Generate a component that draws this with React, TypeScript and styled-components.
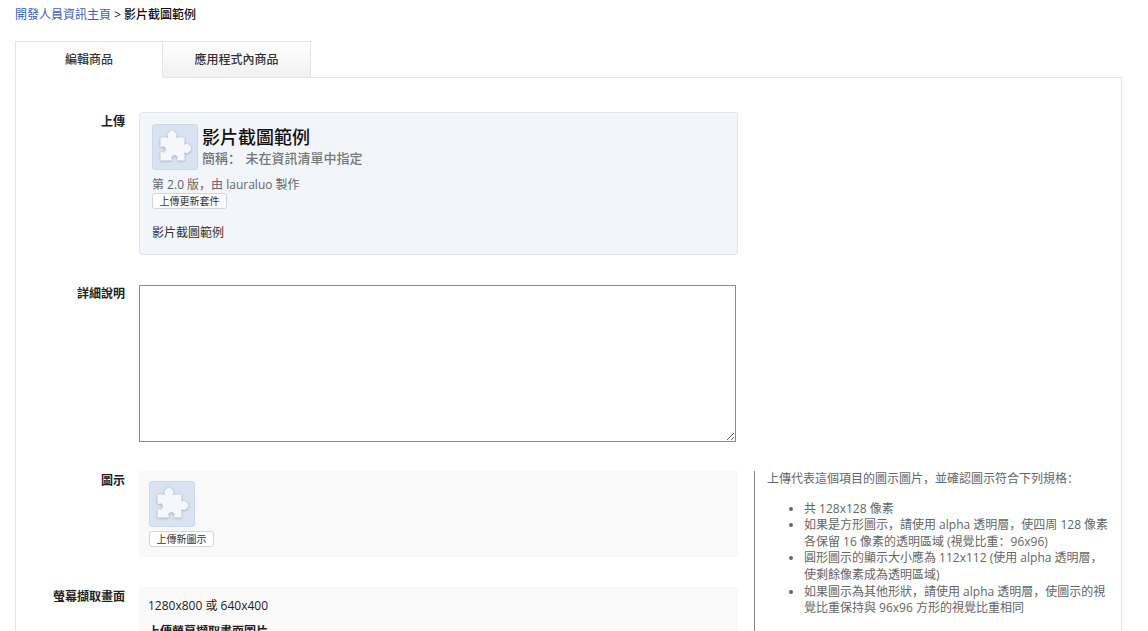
import React from 'react';
import styled, { createGlobalStyle } from 'styled-components';

const GlobalStyle = createGlobalStyle`
  html, body {
    margin: 0;
    padding: 0;
    height: 631px;
    overflow: hidden;
    background: #fff;
    font-family: 'Open Sans', 'Noto Sans CJK SC', sans-serif;
    font-size: 12px;
    color: #333;
  }
`;

const Page = styled.div`
  width: 1148px;
  height: 631px;
  overflow: hidden;
  padding: 7px 26px 0 15px;
  box-sizing: border-box;
`;

const Breadcrumb = styled.div`
  height: 34px;
  line-height: 16px;
  font-weight: 500;
  color: #111;
`;

const CrumbLink = styled.a`
  color: #3b5eb5;
  font-weight: 400;
  text-decoration: none;
`;

const TabBar = styled.div`
  display: flex;
  height: 37px;
  box-sizing: border-box;
  margin-bottom: -1px;
  position: relative;
`;

const Tab = styled.div<{ $active?: boolean; $width: number }>`
  width: ${({ $width }) => $width}px;
  box-sizing: border-box;
  border: 1px solid #e5e5e5;
  border-left-width: ${({ $active }) => ($active ? 1 : 0)}px;
  border-bottom: ${({ $active }) => ($active ? '1px solid #fff' : '1px solid #e5e5e5')};
  background: ${({ $active }) => ($active ? '#fff' : 'linear-gradient(#fff, #f1f1f1)')};
  text-align: center;
  line-height: 35px;
  color: #333;
  font-weight: 500;
`;

const Panel = styled.div`
  border: 1px solid #e5e5e5;
  border-bottom: 0;
  padding-top: 34px;
  height: 600px;
  box-sizing: border-box;
`;

const Row = styled.div<{ $gap: number }>`
  display: grid;
  grid-template-columns: 109px 599px 1fr;
  column-gap: 14px;
  margin-bottom: ${({ $gap }) => $gap}px;
`;

const Label = styled.div<{ $top?: number }>`
  text-align: right;
  font-weight: 700;
  color: #222;
  line-height: 16px;
  padding-top: ${({ $top }) => $top ?? 2}px;
`;

const Card = styled.div`
  background: #f2f5fa;
  border: 1px solid #dfe6f1;
  border-radius: 3px;
  height: 143px;
  box-sizing: border-box;
  padding: 11px 12px;
`;

const CardHead = styled.div`
  display: flex;
  gap: 4px;
`;

const IconTile = styled.div`
  width: 46px;
  height: 46px;
  flex: none;
  box-sizing: border-box;
  background: #d9e2f1;
  border: 1px solid #cdd8ea;
  border-radius: 3px;
  display: flex;
  align-items: center;
  justify-content: center;
`;

const CardTitle = styled.div`
  font-size: 18px;
  line-height: 24px;
  color: #111;
  font-weight: 500;
  margin-top: 1px;
`;

const CardSub = styled.div`
  font-size: 13px;
  line-height: 18px;
  color: #777;
  font-weight: 500;
  word-spacing: 1px;
`;

const Version = styled.div`
  margin-top: 7px;
  line-height: 16px;
  color: #666;
`;

const SmallButton = styled.button`
  display: block;
  height: 16px;
  padding: 0 6.5px;
  background: #fff;
  border: 1px solid #d6d6d6;
  border-radius: 3px;
  font: inherit;
  font-size: 10px;
  line-height: 14px;
  color: #333;
`;

const CardDesc = styled.div`
  margin-top: 16px;
  line-height: 16px;
  color: #333;
`;

const Details = styled.textarea`
  display: block;
  width: 597px;
  height: 157px;
  box-sizing: border-box;
  margin: 0;
  border: 1px solid #8a8a8a;
  background: #fff;
`;

const IconPanel = styled.div`
  background: #f9f9f9;
  height: 86px;
  box-sizing: border-box;
  padding: 10px;
`;

const NewIconButton = styled(SmallButton)`
  margin-top: 4px;
`;

const ShotPanel = styled.div`
  background: #f9f9f9;
  height: 80px;
  box-sizing: border-box;
  padding: 11px 9px;
  line-height: 16px;
  color: #222;
`;

const ShotTitle = styled.div`
  margin-top: 10px;
  font-weight: 700;
`;

const Help = styled.div`
  margin-left: 2px;
  height: 200px;
  width: 359px;
  box-sizing: border-box;
  border-left: 1px solid #888;
  padding-left: 12px;
  color: #666;
  line-height: 16.6px;
`;

const HelpList = styled.ul`
  margin: 13px 0 0;
  padding: 0 0 0 37px;
`;

const IconRow = styled(Row)`
  height: 116px;
  align-items: start;
`;

const Puzzle = () => (
  <svg width="44" height="44" viewBox="1 1 44 44" aria-hidden="true">
    <defs>
      <filter id="puzzleShadow" x="-20%" y="-20%" width="140%" height="140%">
        <feDropShadow dx="0" dy="0.5" stdDeviation="1.3" floodColor="#7f88a0" floodOpacity="0.85" />
      </filter>
    </defs>
    <path
      d="M9 14H17A4 4 0 1 1 23 14H32V21.5A4 4 0 1 1 32 27.5V36H25.5A3.5 3.5 0 1 0 19.5 36H9V28.5A3.5 3.5 0 1 0 9 22.5Z"
      fill="#f5f7fb"
      stroke="#f5f7fb"
      strokeWidth="1"
      strokeLinejoin="round"
      filter="url(#puzzleShadow)"
    />
  </svg>
);

export default function App() {
  return (
    <Page>
      <GlobalStyle />
      <Breadcrumb>
        <CrumbLink href="#">開發人員資訊主頁</CrumbLink> &gt; 影片截圖範例
      </Breadcrumb>
      <TabBar>
        <Tab $active $width={148}>編輯商品</Tab>
        <Tab $width={148}>應用程式內商品</Tab>
      </TabBar>
      <Panel>
        <Row $gap={30}>
          <Label>上傳</Label>
          <Card>
            <CardHead>
              <IconTile><Puzzle /></IconTile>
              <div>
                <CardTitle>影片截圖範例</CardTitle>
                <CardSub>簡稱： 未在資訊清單中指定</CardSub>
              </div>
            </CardHead>
            <Version>第 2.0 版，由 lauraluo 製作</Version>
            <SmallButton>上傳更新套件</SmallButton>
            <CardDesc>影片截圖範例</CardDesc>
          </Card>
        </Row>
        <Row $gap={29}>
          <Label $top={1}>詳細說明</Label>
          <Details />
        </Row>
        <IconRow $gap={0}>
          <Label>圖示</Label>
          <IconPanel>
            <IconTile><Puzzle /></IconTile>
            <NewIconButton>上傳新圖示</NewIconButton>
          </IconPanel>
          <Help>
            上傳代表這個項目的圖示圖片，並確認圖示符合下列規格：
            <HelpList>
              <li>共 128x128 像素</li>
              <li>如果是方形圖示，請使用 alpha 透明層，使四周 128 像素各保留 16 像素的透明區域 (視覺比重：96x96)</li>
              <li>圓形圖示的顯示大小應為 112x112 (使用 alpha 透明層，使剩餘像素成為透明區域)</li>
              <li>如果圖示為其他形狀，請使用 alpha 透明層，使圖示的視覺比重保持與 96x96 方形的視覺比重相同</li>
            </HelpList>
          </Help>
        </IconRow>
        <Row $gap={0}>
          <Label>螢幕擷取畫面</Label>
          <ShotPanel>
            1280x800 或 640x400
            <ShotTitle>上傳螢幕擷取畫面圖片</ShotTitle>
          </ShotPanel>
        </Row>
      </Panel>
    </Page>
  );
}
